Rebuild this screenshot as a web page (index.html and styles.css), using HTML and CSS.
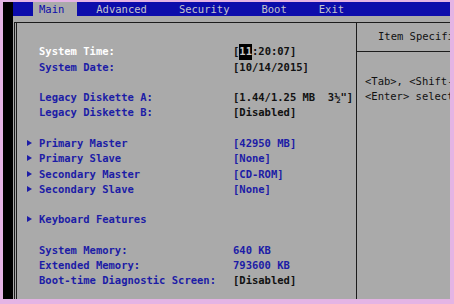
FILE: index.html
```html
<!DOCTYPE html>
<html lang="en">

<head>
    <meta charset="UTF-8">
    <title>BIOS Setup Utility</title>
    <link rel="stylesheet" href="styles.css">
</head>

<body>
    <div class="screen">
        <div class="edge"></div>
        <div class="bios">
            <div class="menubar">
                <span class="tab active">Main</span>
                <span class="tab">Advanced</span>
                <span class="tab">Security</span>
                <span class="tab">Boot</span>
                <span class="tab">Exit</span>
            </div>
            <div class="body">
                <div class="panel">
                    <div class="fields">
                        <div class="row"><span class="label sel">System Time:</span><span class="value">[<span class="cursor">11</span>:20:07]</span></div>
                        <div class="row"><span class="label">System Date:</span><span class="value">[10/14/2015]</span></div>
                        <div class="row"></div>
                        <div class="row"><span class="label">Legacy Diskette A:</span><span class="value">[1.44/1.25 MB  3½"]</span></div>
                        <div class="row"><span class="label">Legacy Diskette B:</span><span class="value">[Disabled]</span></div>
                        <div class="row"></div>
                        <div class="row"><span class="arrow"></span><span class="label">Primary Master</span><span class="value info">[42950 MB]</span></div>
                        <div class="row"><span class="arrow"></span><span class="label">Primary Slave</span><span class="value info">[None]</span></div>
                        <div class="row"><span class="arrow"></span><span class="label">Secondary Master</span><span class="value info">[CD-ROM]</span></div>
                        <div class="row"><span class="arrow"></span><span class="label">Secondary Slave</span><span class="value info">[None]</span></div>
                        <div class="row"></div>
                        <div class="row"><span class="arrow"></span><span class="label">Keyboard Features</span></div>
                        <div class="row"></div>
                        <div class="row"><span class="label">System Memory:</span><span class="value info">640 KB</span></div>
                        <div class="row"><span class="label">Extended Memory:</span><span class="value info">793600 KB</span></div>
                        <div class="row"><span class="label">Boot-time Diagnostic Screen:</span><span class="value">[Disabled]</span></div>
                    </div>
                    <div class="help">
                        <div class="help-title">Item Specific Help</div>
                        <div class="help-text">
                            <div>&lt;Tab&gt;, &lt;Shift-Tab&gt;, or</div>
                            <div>&lt;Enter&gt; selects field.</div>
                        </div>
                    </div>
                </div>
            </div>
        </div>
    </div>
</body>

</html>
```

FILE: styles.css
```css
body {
    margin: 0;
    padding: 0;
    background-color: #e4b4e4;
    font-family: "DejaVu Sans Mono", "Liberation Mono", monospace;
    font-size: 10.5px;
    font-weight: bold;
}

.screen {
    display: flex;
    width: 447px;
    height: 297px;
    margin: 2px 4px 5px 3px;
    overflow: hidden;
}

.edge {
    width: 10px;
    background-color: #000;
}

.bios {
    flex: 1;
    display: flex;
    flex-direction: column;
    min-width: 0;
}

.menubar {
    height: 14px;
    line-height: 14px;
    background-color: #0c0cab;
    padding-left: 20px;
    display: flex;
    gap: 32px;
    white-space: pre;
}

.tab {
    color: #c4c4cc;
    font-weight: normal;
}

.tab.active {
    background-color: #aaaaaa;
    color: #0c0cab;
    padding: 0 13px 0 6px;
    margin-right: -13px;
}

.body {
    flex: 1;
    background-color: #aaaaaa;
    padding: 6px 0 0 1px;
    display: flex;
}

.panel {
    flex: 1;
    display: flex;
    border-left: 3px double #1c1c1c;
    border-top: 1px solid #1c1c1c;
}

.fields {
    width: 339px;
    padding-top: 21.4px;
    border-right: 1px solid #1c1c1c;
}

.row {
    display: flex;
    height: 15.27px;
    line-height: 15.27px;
    padding-left: 22px;
    white-space: pre;
    color: #1c1ca6;
}

.arrow {
    width: 0;
    height: 0;
    margin: 4px 7px 0 -12px;
    border-left: 5px solid #1c1ca6;
    border-top: 3.5px solid transparent;
    border-bottom: 3.5px solid transparent;
}

.label {
    width: 194px;
    flex-shrink: 0;
}

.label.sel {
    color: #fff;
}

.value {
    color: #111;
}

.value.info {
    color: #1c1ca6;
}

.cursor {
    display: inline-block;
    background-color: #000;
    color: #c8c8c8;
}

.help {
    flex: 1;
    color: #111;
    white-space: nowrap;
    font-weight: normal;
}

.help-title {
    height: 29px;
    padding: 6px 0 0 21px;
    box-sizing: border-box;
    line-height: 15.27px;
    border-bottom: 1px solid #1c1c1c;
}

.help-text {
    padding: 21.9px 0 0 8px;
    line-height: 15.27px;
}
```
